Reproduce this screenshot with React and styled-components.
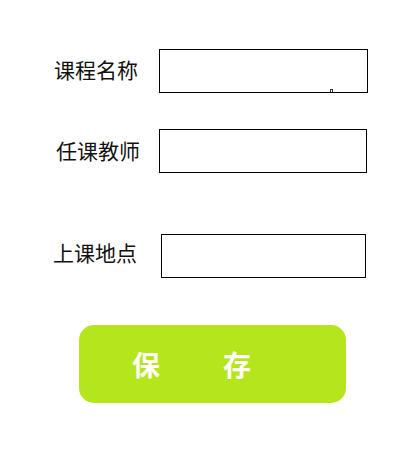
import styled, { createGlobalStyle } from 'styled-components';

const GlobalStyle = createGlobalStyle`
    body {
        margin: 0;
        background: #ffffff;
        font-family: 'Noto Sans CJK SC', 'Noto Sans', sans-serif;
    }
`;

const rows = [
    { label: '课程名称', indent: 54, gap: 21, width: 209, shift: -2, top: 49, mark: true },
    { label: '任课教师', indent: 56, gap: 19, width: 208, shift: -1, top: 36 },
    { label: '上课地点', indent: 53, gap: 24, width: 205, shift: -4, top: 61 },
];

const App = () => {
    return (
        <>
            <GlobalStyle />
            <Form>
                {rows.map((row) => (
                    <Row key={row.label} $indent={row.indent} $top={row.top}>
                        <Label $shift={row.shift}>{row.label}</Label>
                        <Field $gap={row.gap} $width={row.width}>
                            <Input type="text" />
                            {row.mark && <Mark />}
                        </Field>
                    </Row>
                ))}
                <SaveButton type="button">保存</SaveButton>
            </Form>
        </>
    );
};

export default App;

const Form = styled.div`
    display: flex;
    flex-direction: column;
    width: 399px;
    height: 456px;
`;

const Row = styled.div`
    display: flex;
    align-items: center;
    padding-left: ${(p) => p.$indent}px;
    margin-top: ${(p) => p.$top}px;
`;

const Label = styled.span`
    width: 84px;
    font-size: 21px;
    line-height: 1;
    color: #111111;
    white-space: nowrap;
    position: relative;
    top: ${(p) => p.$shift}px;
`;

const Field = styled.div`
    position: relative;
    margin-left: ${(p) => p.$gap}px;
    width: ${(p) => p.$width}px;
    height: 44px;
`;

const Input = styled.input`
    box-sizing: border-box;
    display: block;
    width: 100%;
    height: 100%;
    margin: 0;
    padding: 0 6px;
    border: 1px solid #000000;
    border-radius: 0;
    outline: none;
    background: #ffffff;
    font: inherit;
`;

const Mark = styled.span`
    position: absolute;
    left: 171px;
    bottom: 1px;
    width: 1px;
    height: 2px;
    border: 1px solid #333333;
    border-bottom: none;
`;

const SaveButton = styled.button`
    align-self: flex-start;
    margin: 47px 0 0 79px;
    width: 267px;
    height: 78px;
    padding: 0 0 0 53px;
    border: none;
    border-radius: 15px;
    background: #b5e61d;
    color: #ffffff;
    font-family: 'Noto Sans CJK SC', sans-serif;
    font-size: 28px;
    font-weight: 700;
    letter-spacing: 63px;
    text-align: left;
    cursor: pointer;
`;
